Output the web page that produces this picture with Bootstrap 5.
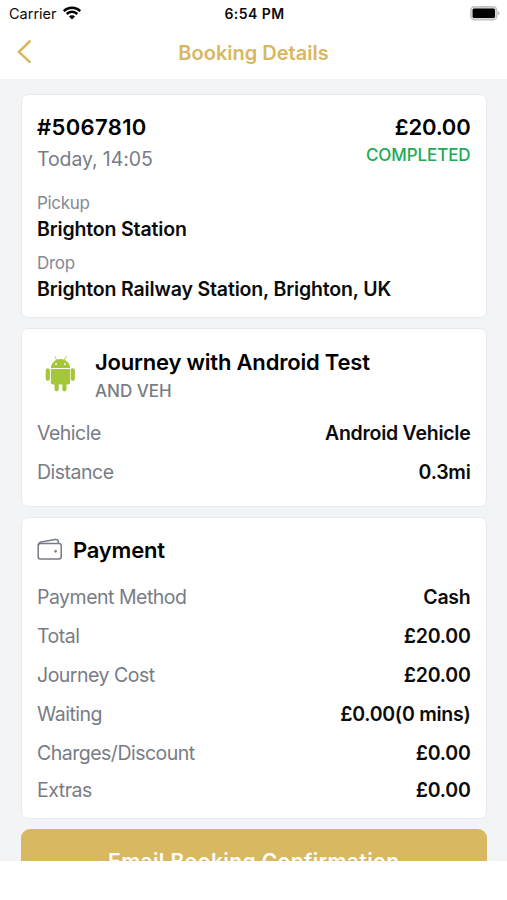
<!DOCTYPE html>
<html lang="en">
<head>
<meta charset="utf-8">
<meta name="viewport" content="width=device-width, initial-scale=1">
<title>Booking Details</title>
<link href="https://cdn.jsdelivr.net/npm/bootstrap@5.3.0/dist/css/bootstrap.min.css" rel="stylesheet">
<style>
  body { font-family: Inter, "Liberation Sans", sans-serif; color: #0b0b0c; height: 900px; overflow: hidden; }
  .status-bar { height: 27px; padding: 0 7px 0 9px; font-size: 14.5px; line-height: 27px; }
  .status-time { font-weight: 600; font-size: 14px; letter-spacing: .45px; }
  .title-bar { height: 52px; padding: 0 17px; color: #d9b760; }
  .page-title { font-size: 20px; font-weight: 600; line-height: 52px; letter-spacing: 0; }
  .screen { height: 782px; background: #f3f4f6; padding: 15px 20px 0 20.5px; }
  .panel { background: #fff; border: 1px solid #e8eaed; border-radius: 7px; padding: 16px 15.5px 0; margin-bottom: 10px; }
  .panel-booking { height: 224px; }
  .panel-journey { height: 178.5px; padding-top: 17px; }
  .panel-payment { height: 302px; }
  .heading { font-size: 22px; font-weight: 600; line-height: 33px; color: #000; letter-spacing: -.2px; }
  .t-id { letter-spacing: .35px; }
  .when { font-size: 19.5px; line-height: 30px; color: #787c86; letter-spacing: -.1px; }
  .state { font-size: 17px; line-height: 22px; font-weight: 500; color: #20ab55; letter-spacing: -.1px; }
  .caption { font-size: 17px; line-height: 27px; color: #858993; letter-spacing: -.3px; }
  .place { font-size: 19.5px; line-height: 25px; font-weight: 600; letter-spacing: -.15px; }
  .vehicle-tag { font-size: 17px; line-height: 25px; font-weight: 500; color: #787c86; }
  .line-item { font-size: 19.5px; line-height: 39px; }
  .line-label { color: #787c86; letter-spacing: -.5px; }
  .line-value { font-weight: 600; letter-spacing: -.25px; }
  .line-last { line-height: 35px; }
  .rows-journey { padding-top: 10px; }
  .rows-payment { padding-top: 11px; }
  .t-pay { padding-left: 10px; }
  .btn-email { background: #d8b860; color: #fff; border-radius: 9px 9px 0 0; height: 32.5px; overflow: hidden; font-size: 21px; font-weight: 600; line-height: 65px; letter-spacing: .4px; }
  svg { display: block; flex: none; }
</style>
<script src="https://cdn.jsdelivr.net/npm/bootstrap@5.3.0/dist/js/bootstrap.bundle.min.js"></script>
</head>
<body class="bg-white">
<header>
  <div class="status-bar row g-0">
    <div class="col d-flex align-items-center"><span>Carrier</span>
      <svg width="26" height="16" viewBox="-6 0 26 16"><path d="M.8 5.100a11.600 11.600 0 0 1 16.400 0M3.700 8a7.500 7.500 0 0 1 10.600 0" fill="none" stroke="#000" stroke-width="2.500"/><path d="M9 13.600 5.900 10.600a4.400 4.400 0 0 1 6.200 0z"/></svg>
    </div>
    <div class="col-auto status-time"><span>6:54 PM</span></div>
    <div class="col d-flex align-items-center justify-content-end">
      <svg width="30" height="15" viewBox="0 0 30 15"><rect x=".8" y=".8" width="26" height="13" rx="3.600" fill="#d9d9d9" stroke="#c2c2c2" stroke-width="1.400"/><rect x="2.600" y="2.600" width="22.400" height="9.500" rx="1.600"/><path d="M27.800 5.200c2.200.8 2.200 3.400 0 4.200z" fill="#b5b5b5"/></svg>
    </div>
  </div>
  <nav class="title-bar row g-0">
    <div class="col d-flex align-items-center">
      <svg width="15" height="24" viewBox="0 0 15 24" class="mb-1"><path d="M12.600 2.500 1.900 12.900l10.700 10" fill="none" stroke="#d9b760" stroke-width="2.600" stroke-linecap="round" stroke-linejoin="round"/></svg>
    </div>
    <h1 class="col-auto page-title m-0"><span>Booking Details</span></h1>
    <div class="col"></div>
  </nav>
</header>
<main class="screen overflow-hidden">
  <section class="panel panel-booking">
    <div class="d-flex justify-content-between">
      <div>
        <div class="heading t-id">#5067810</div>
        <div class="when">Today, 14:05</div>
      </div>
      <div class="text-end">
        <div class="heading">£20.00</div>
        <div class="state">COMPLETED</div>
      </div>
    </div>
    <div class="caption mt-3">Pickup</div>
    <div class="place">Brighton Station</div>
    <div class="caption mt-2">Drop</div>
    <div class="place">Brighton Railway Station, Brighton, UK</div>
  </section>

  <section class="panel panel-journey">
    <div class="d-flex align-items-start">
      <svg width="30" height="38" viewBox="-.5 -2 30 38" class="ms-2 mt-2 me-3" fill="#a4c639"><path d="M5.400 12C5.600 7.300 9.500 3 15 3s9.400 4.300 9.600 9z"/><path d="M9.200.1l2 4M20.800.1l-2 4" stroke="#a4c639" stroke-width=".8"/><path d="M5.400 12.900h19.200v13.500a2 2 0 0 1-2 2H21v4.900a2.100 2.100 0 0 1-4.200 0v-4.900h-3.600v4.900a2.100 2.100 0 0 1-4.200 0v-4.900H7.400a2 2 0 0 1-2-2z"/><rect x=".2" y="12.300" width="4.200" height="12.600" rx="2.100"/><rect x="25.200" y="12.300" width="4.200" height="12.600" rx="2.100"/><circle cx="10.600" cy="8" r=".9" fill="#fff"/><circle cx="19.400" cy="8" r=".9" fill="#fff"/></svg>
      <div class="ps-1">
        <div class="heading">Journey with Android Test</div>
        <div class="vehicle-tag">AND VEH</div>
      </div>
    </div>
    <div class="rows-journey">
      <div class="line-item d-flex justify-content-between"><span class="line-label">Vehicle</span><span class="line-value">Android Vehicle</span></div>
      <div class="line-item d-flex justify-content-between"><span class="line-label">Distance</span><span class="line-value">0.3mi</span></div>
    </div>
  </section>

  <section class="panel panel-payment">
    <div class="d-flex align-items-center">
      <svg width="26" height="26" viewBox="0 0 26 26" fill="none" stroke="#787c86" stroke-width="1.500" stroke-linejoin="round"><rect x="1.200" y="6.500" width="23" height="15.500" rx="2.200"/><path d="M1.300 9c0-2.600.7-3.500 2.800-3.900L18.300 2.500c2-.3 3 .5 3.100 2.400v1.600"/><circle cx="18.600" cy="14.300" r="1" fill="#787c86" stroke-width=".8"/></svg>
      <div class="heading t-pay">Payment</div>
    </div>
    <div class="rows-payment">
      <div class="line-item d-flex justify-content-between"><span class="line-label">Payment Method</span><span class="line-value">Cash</span></div>
      <div class="line-item d-flex justify-content-between"><span class="line-label">Total</span><span class="line-value">£20.00</span></div>
      <div class="line-item d-flex justify-content-between"><span class="line-label">Journey Cost</span><span class="line-value">£20.00</span></div>
      <div class="line-item d-flex justify-content-between"><span class="line-label">Waiting</span><span class="line-value">£0.00(0 mins)</span></div>
      <div class="line-item d-flex justify-content-between"><span class="line-label">Charges/Discount</span><span class="line-value">£0.00</span></div>
      <div class="line-item line-last d-flex justify-content-between"><span class="line-label">Extras</span><span class="line-value">£0.00</span></div>
    </div>
  </section>

  <div class="btn-email text-center">Email Booking Confirmation</div>
</main>
</body>
</html>
